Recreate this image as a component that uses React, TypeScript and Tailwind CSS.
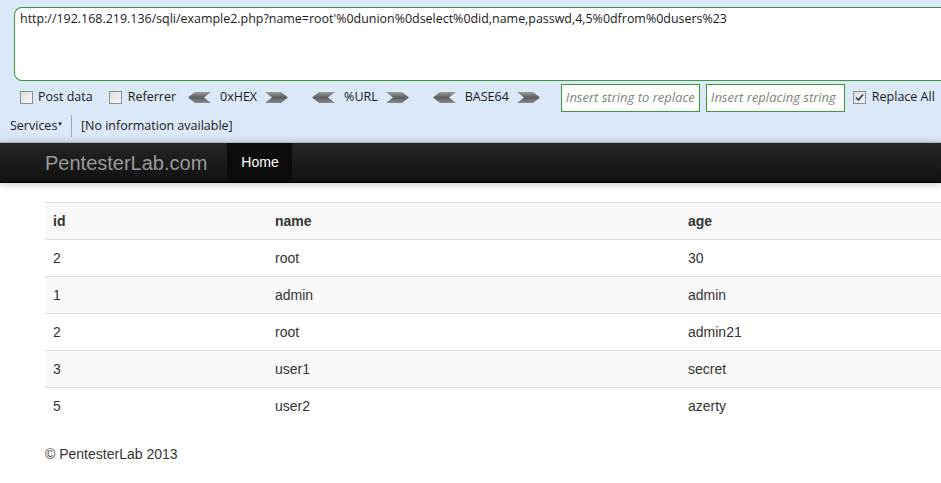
const rows = [
  ["2", "root", "30"],
  ["1", "admin", "admin"],
  ["2", "root", "admin21"],
  ["3", "user1", "secret"],
  ["5", "user2", "azerty"],
];

const ArrowLeft = () => (
  <svg width="23" height="11" viewBox="0 0 23 11" className="shrink-0">
    <defs>
      <linearGradient id="al" x1="0" y1="0" x2="0" y2="1">
        <stop offset="0" stopColor="#9a9a9a" />
        <stop offset="0.5" stopColor="#5e5e5e" />
        <stop offset="1" stopColor="#8a8a8a" />
      </linearGradient>
    </defs>
    <polygon points="0,5.5 7,0 23,0 16,5.5 23,11 7,11" fill="url(#al)" />
  </svg>
);

const ArrowRight = () => (
  <svg width="23" height="11" viewBox="0 0 23 11" className="shrink-0">
    <defs>
      <linearGradient id="ar" x1="0" y1="0" x2="0" y2="1">
        <stop offset="0" stopColor="#9a9a9a" />
        <stop offset="0.5" stopColor="#5e5e5e" />
        <stop offset="1" stopColor="#8a8a8a" />
      </linearGradient>
    </defs>
    <polygon points="23,5.5 16,0 0,0 7,5.5 0,11 16,11" fill="url(#ar)" />
  </svg>
);

const Check = ({ checked = false }: { checked?: boolean }) => (
  <div className="shrink-0 w-[13px] h-[13px] border border-[#8f8f8f] bg-gradient-to-br from-[#dcdcdc] to-[#f8f8f8] flex items-center justify-center">
    {checked && (
      <svg width="9" height="9" viewBox="0 0 9 9">
        <path d="M1 4.5 L3.5 7 L8 1.5" stroke="#2a3a5a" strokeWidth="1.6" fill="none" />
      </svg>
    )}
  </div>
);

const Encoder = ({ label }: { label: string }) => (
  <div className="flex items-center shrink-0">
    <ArrowLeft />
    <span className="ml-[9px] mr-[8px]">{label}</span>
    <ArrowRight />
  </div>
);

export default function App() {
  return (
    <div className="w-[941px] h-[483px] overflow-hidden bg-white">
      <div
        className="h-[142px] bg-[#dbe8f8] text-[12.5px] text-[#1a1a1a] whitespace-nowrap"
        style={{ fontFamily: '"Open Sans", "DejaVu Sans", sans-serif' }}
      >
        <div className="pt-[7px] pl-[14px]">
          <div className="h-[74px] bg-white border border-[#3a9a3a] border-r-0 rounded-l-[8px] pl-[5px] pt-[2px] text-[12.45px]">
            http://192.168.219.136/sqli/example2.php?name=root'%0dunion%0dselect%0did,name,passwd,4,5%0dfrom%0dusers%23
          </div>
        </div>
        <div className="flex items-center h-[31px] pt-[2px] pl-[20px]">
          <Check />
          <span className="ml-[5px]">Post data</span>
          <div className="ml-[16px]">
            <Check />
          </div>
          <span className="ml-[6px]">Referrer</span>
          <div className="ml-[12px]">
            <Encoder label="0xHEX" />
          </div>
          <div className="ml-[24px]">
            <Encoder label="%URL" />
          </div>
          <div className="ml-[24px]">
            <Encoder label="BASE64" />
          </div>
          <div className="shrink-0 ml-[21px] w-[139px] h-[28px] bg-white border border-[#3a9a3a] overflow-hidden pl-[4px] flex items-center italic text-[13px] text-[#7f7f7f]">
            Insert string to replace
          </div>
          <div className="shrink-0 ml-[6px] w-[139px] h-[28px] bg-white border border-[#3a9a3a] overflow-hidden pl-[4px] flex items-center italic text-[13px] text-[#7f7f7f]">
            Insert replacing string
          </div>
          <div className="ml-[8px]">
            <Check checked />
          </div>
          <span className="ml-[6px]">Replace All</span>
        </div>
        <div className="flex items-center h-[28px] pl-[10px]">
          <span>Services</span>
          <span className="text-[7px] ml-[1px] -mt-[4px]">▾</span>
          <div className="ml-[9px] w-px h-[22px] bg-[#9aa8b8]" />
          <span className="ml-[9px]">[No information available]</span>
        </div>
      </div>

      <div style={{ fontFamily: '"Liberation Sans", Arial, sans-serif' }}>
        <div className="h-[41px] bg-gradient-to-b from-[#262626] to-[#111111] border-t border-[#a8b4c0] border-b border-b-[#000] shadow-[0_1px_8px_rgba(0,0,0,0.25)] flex items-stretch pl-[45px]">
          <div className="text-[#9a9a9a] text-[20px] flex items-center">PentesterLab.com</div>
          <div className="ml-[20px] bg-[#0c0c0c] px-[14px] flex items-center text-white text-[14px] w-[65px]">
            Home
          </div>
        </div>

        <div className="pl-[45px] pt-[19px] text-[14px] text-[#333]">
          <div className="w-[940px] border-t border-[#dddddd]">
            <div className="flex h-[36px] items-center bg-[#f9f9f9] font-bold">
              <div className="w-[222px] pl-[8px]">id</div>
              <div className="w-[413px] pl-[8px]">name</div>
              <div className="pl-[8px]">age</div>
            </div>
            {rows.map((r, i) => (
              <div
                key={i}
                className={`flex h-[37px] items-center border-t border-[#dddddd] ${i % 2 === 1 ? "bg-[#f9f9f9]" : "bg-white"}`}
              >
                <div className="w-[222px] pl-[8px]">{r[0]}</div>
                <div className="w-[413px] pl-[8px]">{r[1]}</div>
                <div className="pl-[8px]">{r[2]}</div>
              </div>
            ))}
          </div>
          <div className="mt-[20px] text-[14px] text-[#333]">© PentesterLab 2013</div>
        </div>
      </div>
    </div>
  );
}
